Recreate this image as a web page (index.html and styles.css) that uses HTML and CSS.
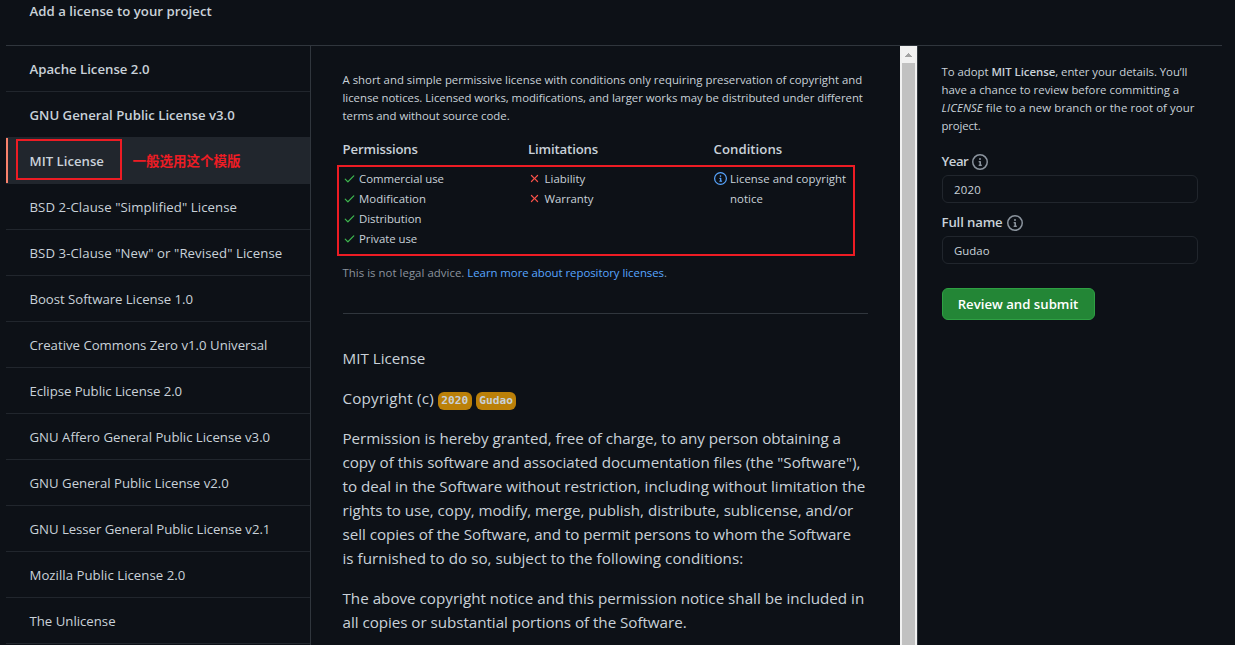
FILE: index.html
```
<!DOCTYPE html>
<html lang="en">
<head>
<meta charset="utf-8">
<title>Add a license to your project</title>
<link rel="stylesheet" href="styles.css">
</head>
<body>
<svg class="defs" width="0" height="0">
  <symbol id="check" viewBox="0 0 16 16"><path fill-rule="evenodd" d="M13.78 4.22a.75.75 0 010 1.06l-7.25 7.25a.75.75 0 01-1.06 0L2.22 9.28a.75.75 0 011.06-1.06L6 10.94l6.72-6.72a.75.75 0 011.06 0z"/></symbol>
  <symbol id="x" viewBox="0 0 16 16"><path fill-rule="evenodd" d="M3.72 3.72a.75.75 0 011.06 0L8 6.94l3.22-3.22a.75.75 0 111.06 1.06L9.06 8l3.22 3.22a.75.75 0 11-1.06 1.06L8 9.06l-3.22 3.22a.75.75 0 01-1.06-1.06L6.94 8 3.72 4.78a.75.75 0 010-1.06z"/></symbol>
  <symbol id="info" viewBox="0 0 16 16"><path fill-rule="evenodd" d="M8 1.5a6.5 6.5 0 100 13 6.5 6.5 0 000-13zM0 8a8 8 0 1116 0A8 8 0 010 8zm6.5-.25A.75.75 0 017.25 7h1a.75.75 0 01.75.75v2.75h.25a.75.75 0 010 1.5h-2a.75.75 0 010-1.5h.25v-2h-.25a.75.75 0 01-.75-.75zM8 6a1 1 0 100-2 1 1 0 000 2z"/></symbol>
</svg>
<header class="top"><span class="t loose">Add a license to your project</span></header>
<div class="layout">
  <nav class="nav">
    <a class="item bold"><span class="t">Apache License 2.0</span></a>
    <a class="item bold"><span class="t">GNU General Public License v3.0</span></a>
    <a class="item bold selected"><span class="t">MIT License</span><span class="frame pick"></span><span class="note">一般选用这个模版</span></a>
    <a class="item"><span class="t looser">BSD 2-Clause "Simplified" License</span></a>
    <a class="item"><span class="t looser">BSD 3-Clause "New" or "Revised" License</span></a>
    <a class="item"><span class="t tight">Boost Software License 1.0</span></a>
    <a class="item"><span class="t">Creative Commons Zero v1.0 Universal</span></a>
    <a class="item"><span class="t tight">Eclipse Public License 2.0</span></a>
    <a class="item"><span class="t">GNU Affero General Public License v3.0</span></a>
    <a class="item"><span class="t">GNU General Public License v2.0</span></a>
    <a class="item"><span class="t tight">GNU Lesser General Public License v2.1</span></a>
    <a class="item"><span class="t loose">Mozilla Public License 2.0</span></a>
    <a class="item"><span class="t">The Unlicense</span></a>
  </nav>
  <main class="main">
    <p class="desc"><span class="t">A short and simple permissive license with conditions only requiring preservation of copyright and</span><br><span class="t tight">license notices. Licensed works, modifications, and larger works may be distributed under different</span><br><span class="t tight">terms and without source code.</span></p>
    <div class="rules">
      <section><h3 class="h"><span class="t tighter">Permissions</span></h3>
        <ul class="list">
          <li><svg class="ic green"><use href="#check"/></svg><span class="t tight">Commercial use</span></li>
          <li><svg class="ic green"><use href="#check"/></svg><span class="t looser">Modification</span></li>
          <li><svg class="ic green"><use href="#check"/></svg><span class="t tight">Distribution</span></li>
          <li><svg class="ic green"><use href="#check"/></svg><span class="t tight">Private use</span></li>
        </ul></section>
      <section><h3 class="h"><span class="t tighter">Limitations</span></h3>
        <ul class="list limits">
          <li><svg class="ic red"><use href="#x"/></svg><span class="t loose">Liability</span></li>
          <li><svg class="ic red"><use href="#x"/></svg><span class="t tight">Warranty</span></li>
        </ul></section>
      <section><h3 class="h"><span class="t loose">Conditions</span></h3>
        <ul class="list">
          <li><svg class="ic blue"><use href="#info"/></svg><span><span class="t loose">License and copyright</span><br><span class="t loose">notice</span></span></li>
        </ul></section>
      <span class="frame box"></span>
    </div>
    <p class="legal"><span class="t loose">This is not legal advice.</span> <a class="link"><span class="t tight">Learn more about repository licenses</span></a>.</p>
    <article class="text">
      <p><span class="t">MIT License</span></p>
      <p class="copyright"><span class="t wide">Copyright (c)</span> <b class="tag">2020</b> <b class="tag">Gudao</b></p>
      <p><span class="t tight">Permission is hereby granted, free of charge, to any person obtaining a</span><br><span class="t tight">copy of this software and associated documentation files (the "Software"),</span><br><span class="t">to deal in the Software without restriction, including without limitation the</span><br><span class="t tight">rights to use, copy, modify, merge, publish, distribute, sublicense, and/or</span><br><span class="t tight">sell copies of the Software, and to permit persons to whom the Software</span><br><span class="t loose">is furnished to do so, subject to the following conditions:</span></p>
      <p><span class="t">The above copyright notice and this permission notice shall be included in</span><br><span class="t tight">all copies or substantial portions of the Software.</span></p>
    </article>
  </main>
  <div class="bar"><svg class="arrow" viewBox="0 0 7 4"><path d="M3 0h1v1h1v1h1v1h1v1H0V3h1V2h1V1h1z"/></svg><div class="thumb"></div></div>
  <aside class="side">
    <p class="adopt"><span class="t tight">To adopt <b class="bold">MIT License</b>, enter your details. You’ll</span><br><span class="t">have a chance to review before committing a</span><br><span class="t looser"><i>LICENSE</i> file to a new branch or the root of your</span><br><span class="t tighter">project.</span></p>
    <label class="label"><span class="t year">Year</span><svg class="ic16"><use href="#info"/></svg></label>
    <div class="input"><span class="t wide">2020</span></div>
    <label class="label"><span class="t tighter">Full name</span><svg class="ic16"><use href="#info"/></svg></label>
    <div class="input"><span class="t loose">Gudao</span></div>
    <button class="btn"><span class="t">Review and submit</span></button>
  </aside>
</div>
</body>
</html>
```
FILE: styles.css
```
* { box-sizing: border-box; }
body { margin: 0; height: 645px; overflow: hidden; background: #0d1117; color: #c9d1d9; font-family: "Open Sans", "Noto Sans CJK SC", sans-serif; font-size: 13.2px; }
p, h3, ul { margin: 0; padding: 0; list-style: none; }
.defs { display: block; position: absolute; }
.t { white-space: nowrap; }
.tight { letter-spacing: -.04px; }
.tighter { letter-spacing: -.15px; }
.loose { letter-spacing: .035px; }
.looser { letter-spacing: .075px; }
.wide { letter-spacing: .2px; }
.year { letter-spacing: -.5px; }
.top { height: 45px; padding: 1px 0 0 29.5px; line-height: 20px; font-weight: 600; }
.layout { display: flex; height: 600px; margin: 0 13px 0 6px; border-top: 1px solid #30363d; }
.nav { width: 305px; height: 600px; flex: none; border-right: 1px solid #30363d; }
.item { display: flex; align-items: center; position: relative; height: 46px; padding-left: 23.5px; border-bottom: 1px solid #21262d; }
.bold { font-weight: 600; }
.selected { background: #21262d; }
.selected::before { content: ""; position: absolute; left: 0; top: 0; width: 2px; height: 45px; background: #f9826c; }
.frame { position: absolute; border: 2px solid #ed1c24; }
.pick { left: 10px; top: 1px; width: 106px; height: 41px; }
.note { margin: -2px 0 0 28.5px; color: #ed1c24; font: 700 13.5px "Noto Sans CJK SC", sans-serif; }
.main { width: 589px; flex: none; padding: 25px 32px 0 31.5px; }
.desc { font-size: 11.4px; line-height: 18px; }
.rules { display: grid; grid-template-columns: 185.5px 185.5px 1fr; position: relative; margin-top: 14px; height: 110px; }
.h { font-size: 13.2px; line-height: 20px; font-weight: 600; }
.list { margin-top: 10px; font-size: 11.4px; line-height: 20px; }
.list li { display: flex; }
.ic { width: 13px; height: 13px; flex: none; margin: 3px 3.5px 0 0; }
.limits .ic { margin: 3px 4px 0 -.5px; }
.green { fill: #3fb950; }
.red { fill: #f85149; }
.blue { fill: #58a6ff; }
.box { left: -5.5px; top: 26px; width: 518px; height: 91px; }
.legal { margin-top: 15px; font-size: 11.4px; line-height: 18px; color: #8b949e; }
.link { color: #58a6ff; }
.text { margin-top: 31px; padding-top: 32px; border-top: 1px solid #30363d; font-size: 15.2px; line-height: 24px; }
.text p { margin-bottom: 16px; }
.text .copyright { height: 24px; }
.tag { font: 700 11.2px "DejaVu Sans Mono", monospace; background: #bb8009; border-radius: 6px; padding: 2px 3.5px 3px; }
.bar { width: 18px; flex: none; background: #f1f1f1; border-right: 1px solid #30363d; padding: 7px 2px 0; }
.arrow { display: block; width: 7px; height: 4px; margin: 0 auto 6px; fill: #a3a3a3; }
.thumb { height: 583px; background: #c1c1c1; }
.side { padding: 17px 24px 0 23.5px; flex: 1; }
.adopt { font-size: 11.4px; line-height: 18px; margin-bottom: 16px; }
.label { display: flex; align-items: center; height: 20px; font-weight: 600; margin-bottom: 4px; }
.ic16 { width: 16px; height: 16px; margin: 1px 0 0 4px; fill: #8b949e; }
.input { width: 256px; height: 28px; border: 1px solid #21262d; border-radius: 6px; padding-left: 11.5px; font-size: 11.4px; line-height: 27px; margin-bottom: 9px; }
.btn { display: block; width: 153px; height: 32px; margin-top: 24px; padding: 0; border: 1px solid #2ea043; border-radius: 6px; background: #238636; color: #fff; font: 600 13.2px "Open Sans", sans-serif; }
```
